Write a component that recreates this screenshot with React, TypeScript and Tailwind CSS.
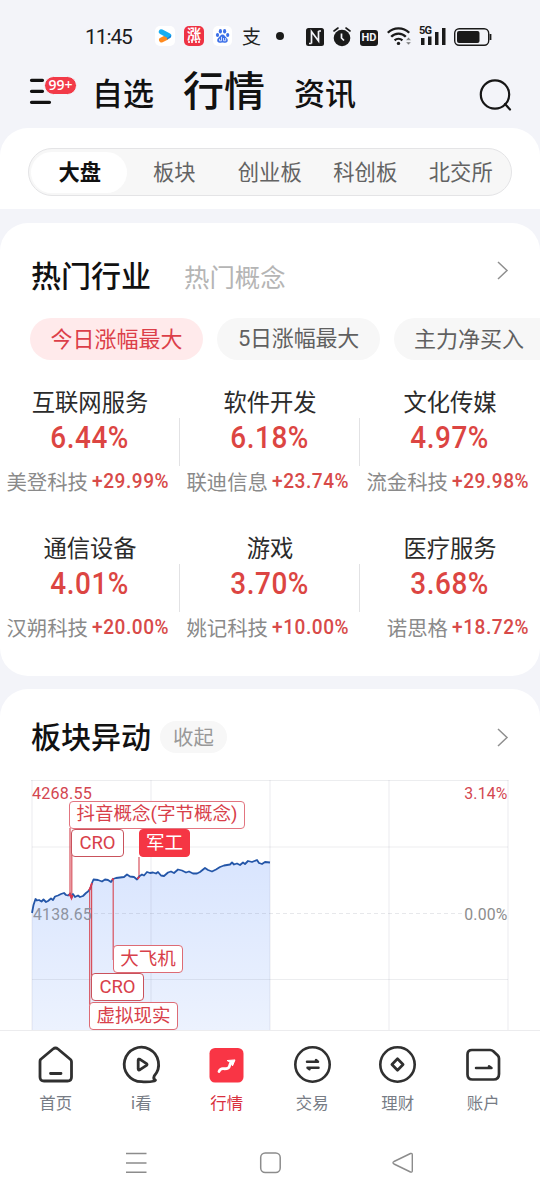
import type { ReactNode } from "react";
import clsx from "clsx";

const segments = ["大盘", "板块", "创业板", "科创板", "北交所"];

const industries = [
  { name: "互联网服务", change: "6.44%", stock: "美登科技", stockChange: "+29.99%" },
  { name: "软件开发", change: "6.18%", stock: "联迪信息", stockChange: "+23.74%" },
  { name: "文化传媒", change: "4.97%", stock: "流金科技", stockChange: "+29.98%" },
  { name: "通信设备", change: "4.01%", stock: "汉朔科技", stockChange: "+20.00%" },
  { name: "游戏", change: "3.70%", stock: "姚记科技", stockChange: "+10.00%" },
  { name: "医疗服务", change: "3.68%", stock: "诺思格", stockChange: "+18.72%" },
];

const trend =
  "32,913 33.5,905 35.5,899 37,900.5 39,900 41.5,901.5 43.5,899.5 46,902 48,901 51,898.5 53,900 55,896.5 58,895.5 61,894 64,893 66,895 68,895.5 70,894 71.5,898 73,894 75,897 78,895.5 80,897 83,896 86,893 88,891.5 90,889 92,883 93.5,879.5 98,880 102,881.5 105,879.5 108,880 111,882 113,879 116,878 120,877.5 124,877 127,874.5 130,876.5 134,877 137,879.5 139,876.5 142,874.5 144,875.5 147,872 150,873 153,872.5 156,873.5 158,872 161,875.5 164,876 168,872.5 171,871.5 174,873 178,869.5 182,870.5 186,872.5 189,871.5 193,873.5 197,873.5 200,872 205,868 208,870 212,871.5 216,869.5 220,867 224,865.5 230,864.5 232,862.5 234,864.5 237,863.5 240,865 243,862.5 245,864 248,861 252,862 257,860 259,863 262,864 265,862 270,862.5";

const stems = [
  { x: 70, y1: 828, y2: 896 },
  { x: 71.8, y1: 850, y2: 897 },
  { x: 139, y1: 857, y2: 878 },
  { x: 113.2, y1: 879, y2: 960 },
  { x: 89.7, y1: 890, y2: 1005 },
  { x: 91.6, y1: 885, y2: 980 },
];

function ChevronRight() {
  return (
    <svg width="12" height="20" viewBox="0 0 12 20" fill="none" stroke="#8f8f8f" strokeWidth="1.5">
      <path d="M1 2 10 10.500 1 19" />
    </svg>
  );
}

function StatusBar() {
  return (
    <div className="flex h-[72px] items-center pl-[85px]">
      <span className="mt-[3px] w-[48px] font-['Roboto',sans-serif] text-[21px] tracking-[-1.1px] whitespace-nowrap text-[#1c1c1e]">11:45</span>
      <svg className="ml-[22px] shrink-0" width="20" height="20" viewBox="0 0 20 20">
        <rect width="20" height="20" rx="5" fill="#fff" />
        <path d="M6.500 14 11 11.800" stroke="#ff8a1f" strokeWidth="5" strokeLinecap="round" />
        <path d="M6.300 5.800 13.800 9.800" stroke="#18aef2" strokeWidth="5" strokeLinecap="round" />
        <path d="M12 12.500 16 9.200q.5 1.600-.8 2.500L12 13.500Z" fill="#1677d9" />
      </svg>
      <span className="ml-[9px] flex size-[20px] shrink-0 flex-col items-center rounded-[5px] bg-[#ee3344] text-white">
        <span className="text-[14px] leading-[14px] font-bold">涨</span>
        <span className="mt-px h-[2px] w-[12px] border-t-2 border-dotted border-white/80" />
      </span>
      <svg className="ml-[9px] shrink-0" width="19" height="20" viewBox="0 0 19 20">
        <rect width="19" height="20" rx="5" fill="#fff" />
        <g fill="#3b6fe8">
          <ellipse cx="4.500" cy="9" rx="1.600" ry="2.100" />
          <ellipse cx="7.400" cy="5.200" rx="1.600" ry="2.200" />
          <ellipse cx="11.600" cy="5.200" rx="1.600" ry="2.200" />
          <ellipse cx="14.700" cy="9" rx="1.600" ry="2.100" />
          <path d="M9.500 8.500c2 0 2.600 2 4 3.200 2.200 1.800 1.400 5-1.200 5-1.200 0-1.600-.3-2.800-.3s-1.600.3-2.800.3c-2.600 0-3.400-3.200-1.200-5C6.900 10.500 7.500 8.500 9.500 8.500Z" />
        </g>
        <path d="M6.500 12.800v2h2v-4M10.500 12v2.800h2.200V12" fill="none" stroke="#dfe6ff" strokeWidth="0.9" />
      </svg>
      <span className="ml-[10px] w-[20px] text-[19px] leading-[20px] text-[#222]">支</span>
      <span className="ml-[14px] size-[8px] shrink-0 rounded-full bg-[#1a1a1a]" />
      <svg className="mt-[2px] ml-[22px] shrink-0" width="18" height="18" viewBox="0 0 18 18">
        <rect width="18" height="18" rx="2.500" fill="#1a1a1a" />
        <path d="M5.500 15.500V3.500l7 9.500V3M3 15.500h2.500M12.500 3H15" fill="none" stroke="#f3f4f9" strokeWidth="1.700" />
      </svg>
      <svg className="mt-[1px] ml-[9px] shrink-0" width="18" height="20" viewBox="0 0 18 20">
        <circle cx="9" cy="11" r="8.300" fill="#1a1a1a" />
        <path d="M1 4 5 1M17 4 13 1" stroke="#1a1a1a" strokeWidth="1.600" strokeLinecap="round" />
        <path d="M8.500 6.500V11l2.500 2.500" fill="none" stroke="#f3f4f9" strokeWidth="1.700" />
      </svg>
      <span className="mt-[3px] ml-[9px] flex h-[16px] w-[18px] shrink-0 items-center justify-center rounded-[3px] bg-[#1a1a1a] font-['Roboto',sans-serif] text-[11px] leading-none font-bold text-[#f3f4f9]">
        HD
      </span>
      <svg className="ml-[9px] shrink-0" width="25" height="20" viewBox="0 0 25 20" fill="none" stroke="#1a1a1a" strokeWidth="2.300">
        <path d="M.8 6.800a15 15 0 0 1 21.400 0M4.200 10.700a10 10 0 0 1 14.600 0M7.600 14.300a5.800 5.800 0 0 1 7.800 0" />
        <circle cx="11.500" cy="17.400" r="1.700" fill="#1a1a1a" stroke="none" />
        <path d="m18.800 14.200 2.700-3 2.700 3ZM18.800 16l2.700 3 2.700-3Z" fill="#777" stroke="#f3f4f9" strokeWidth=".5" />
      </svg>
      <div className="relative ml-[7px] h-[20px] w-[27px] shrink-0">
        <svg width="27" height="20" viewBox="0 0 27 20" fill="#1a1a1a">
          <path d="M2 12H5.500v7H2ZM9 10.500H12.500V19H9ZM16 6H19.500v13H16ZM23 2H26.500v17H23Z" />
        </svg>
        <span className="absolute -top-px left-0 bg-[#f3f4f9] font-['Roboto',sans-serif] text-[11px] leading-[11px] font-bold tracking-[-0.8px] text-[#1a1a1a]">5G</span>
      </div>
      <svg className="mt-[1px] ml-[8px] shrink-0" width="38" height="18" viewBox="0 0 38 18">
        <rect x=".7" y=".7" width="34" height="16.600" rx="4.500" fill="none" stroke="#1a1a1a" strokeWidth="1.400" />
        <rect x="3" y="3" width="22.500" height="12" rx="2" fill="#1a1a1a" />
        <path d="M36.500 6v6" stroke="#1a1a1a" strokeWidth="1.800" />
      </svg>
    </div>
  );
}

function Header() {
  return (
    <header className="flex h-[56px] items-end pl-[29px] whitespace-nowrap text-[#111]">
      <div className="relative h-[52px] w-[63px] shrink-0">
        <svg width="24" height="30" viewBox="0 0 24 30" stroke="#111" strokeWidth="3.200" strokeLinecap="round">
          <path d="M2.500 4.300h11M2.500 15.300h11M2.500 26.300h18" />
        </svg>
        <span className="absolute top-0 left-[15px] flex h-[19px] w-[33px] items-center justify-center rounded-full border border-[#f3f4f9] bg-[#f23a48] pb-px font-['Open_Sans',sans-serif] text-[14px] leading-none font-semibold text-white">
          99+
        </span>
      </div>
      <span className="h-[52px] text-[31px] leading-[31px] font-medium">自选</span>
      <span className="ml-[29px] h-[60px] text-[41px] leading-[41px] font-medium">行情</span>
      <span className="ml-[29px] h-[52px] text-[31px] leading-[31px] font-medium">资讯</span>
      <svg className="mb-[16px] ml-[123px] shrink-0" width="34" height="34" viewBox="0 0 34 34" fill="none" stroke="#161616" strokeWidth="2.200">
        <circle cx="16" cy="16.500" r="14.200" />
        <path d="m26 26 5 5.500" strokeLinecap="round" />
      </svg>
    </header>
  );
}

function IndustryCell({ item, divider }: { item: (typeof industries)[number]; divider: boolean }) {
  return (
    <div className="relative h-[145.500px] whitespace-nowrap">
      <div className="text-center text-[23.300px] leading-[30px] text-[#2b2b2b]">{item.name}</div>
      <div className="mt-[3px] text-center font-['Roboto',sans-serif] text-[31px] leading-[38px] font-medium">
        <span className="inline-block scale-x-[.9] tracking-[0.6px] text-[#dc4542]">{item.change}</span>
      </div>
      <div className="mt-[10px] flex items-center gap-[4px] pl-[6px] leading-[28px]">
        <span className="w-[82px] text-right text-[20.400px] text-[#8a8a8a]">{item.stock}</span>
        <span className="origin-left scale-x-[.93] font-['Roboto',sans-serif] text-[20.500px] font-medium tracking-[0.6px] text-[#d84a49]">
          {item.stockChange}
        </span>
      </div>
      {divider && <div className="absolute top-[32px] right-0 h-[48px] w-px bg-[#e2e2e4]" />}
    </div>
  );
}

function ChartTag({ className, children }: { className: string; children: ReactNode }) {
  return (
    <span
      className={clsx(
        "absolute flex h-[28px] items-center justify-center rounded-[4px] border text-[18.500px] leading-none whitespace-nowrap",
        className,
      )}
    >
      {children}
    </span>
  );
}

function SectorChart() {
  return (
    <div className="relative h-[250px] w-full font-['Roboto','Noto_Sans_CJK_SC',sans-serif]">
      <svg width="540" height="250" viewBox="0 780 540 250" fill="none">
        <defs>
          <linearGradient id="trendFill" x1="0" y1="860" x2="0" y2="1030" gradientUnits="userSpaceOnUse">
            <stop offset="0" stopColor="#d9e5fe" />
            <stop offset="1" stopColor="#ecf2fe" />
          </linearGradient>
        </defs>
        <path d={`M${trend.split(" ").join("L")}V1030H32Z`} fill="url(#trendFill)" />
        <path d="M31 780.500H508.500M32 847H508M32 979.500H508" stroke="#6b7280" strokeOpacity=".13" />
        <path d="M32 780V1030M151 780V1030M270 780V1030M389 780V1030M508 780V1030" stroke="#6b7280" strokeOpacity=".09" strokeWidth="1.500" />
        <path d="M94 913.500H464" stroke="#6b7280" strokeOpacity=".16" strokeDasharray="4 3" />
        {stems.map((s) => (
          <path key={s.x} d={`M${s.x} ${s.y1}V${s.y2}`} stroke="#d8505c" strokeWidth="1.200" />
        ))}
        <polyline points={trend} stroke="#2456a8" strokeWidth="1.800" strokeLinejoin="round" />
        <path d="m69 896 1-2 1.500 4 1-3M89 890.500l1.500-3 1.500-4.500M112 880l1.500-1.500M137.500 879l2-2.500" stroke="#e0384c" strokeWidth="1.800" />
      </svg>
      <span className="absolute top-[3px] left-[32px] origin-left scale-x-[.95] text-[17px] leading-[20px] tracking-[0.2px] text-[#d34650]">4268.55</span>
      <span className="absolute top-[124px] left-[33px] origin-left scale-x-[.93] text-[17px] leading-[20px] tracking-[0.2px] text-[#8d93a1]">4138.65</span>
      <span className="absolute top-[3px] right-[32px] origin-right scale-x-[.93] text-[17px] leading-[20px] tracking-[0.2px] text-[#d34650]">3.14%</span>
      <span className="absolute top-[124px] right-[32px] origin-right scale-x-[.93] text-[17px] leading-[20px] tracking-[0.2px] text-[#8d8d8d]">0.00%</span>
      <ChartTag className="top-[20.500px] left-[69px] w-[176px] border-[#e27580] bg-white text-[#d8404a]">抖音概念(字节概念)</ChartTag>
      <ChartTag className="top-[49px] left-[71px] w-[53px] border-[#c9525c] bg-white text-[#d8404a]">CRO</ChartTag>
      <ChartTag className="top-[49px] left-[139px] w-[51px] border-[#f53644] bg-[#f53644] text-white">军工</ChartTag>
      <ChartTag className="top-[164.500px] left-[113px] w-[70px] border-[#dd6b75] bg-white pt-px text-[#d8404a]">大飞机</ChartTag>
      <ChartTag className="top-[193px] left-[91px] w-[53px] border-[#c9525c] bg-white text-[#d8404a]">CRO</ChartTag>
      <ChartTag className="top-[221.500px] left-[89px] w-[89px] border-[#dd6b75] bg-white pt-px text-[#d8404a]">虚拟现实</ChartTag>
    </div>
  );
}

const tabs = [
  {
    label: "首页",
    icon: (
      <path d="M3.500 13.500 16 3q2.500-2 5 0l12.500 10.500q1 .9 1 2.300V31q0 4-4 4H7q-4 0-4-4V15.800q0-1.400.5-2.300ZM13.500 27.500h10.500" />
    ),
  },
  {
    label: "i看",
    icon: (
      <>
        <path d="M31.200 30A17.200 17.200 0 1 0 18.500 35.700q6.500.6 13-.7l1-.8q-2.600-1.200-1.300-4.200Z" strokeWidth="2.800" />
        <path d="M15.200 14.200v8.600q.2 1.800 1.800.9l6.500-4.300q1.100-.9 0-1.800L17 13.300q-1.600-.8-1.800.9Z" />
      </>
    ),
  },
  {
    label: "行情",
    active: true,
    icon: (
      <>
        <rect x="1.500" y="2" width="34" height="34.500" rx="5.500" fill="#f93545" stroke="none" />
        <path d="M11 25.500q1.500-3.300 4.500-2.800 5.500.3 6-2.700.5-2.500 2-4" stroke="#fff" strokeWidth="2.800" />
        <path d="m19.500 14.500 7.500-.6-2.500 6-1.500-3Z" fill="#fff" stroke="#fff" strokeWidth="1" />
      </>
    ),
  },
  {
    label: "交易",
    icon: (
      <>
        <circle cx="18.500" cy="18.500" r="17.200" strokeWidth="2.600" />
        <path d="M13 15.700h11l-2-1.600M24.500 21.700H13.500l2 1.600" strokeWidth="2.500" />
      </>
    ),
  },
  {
    label: "理财",
    icon: (
      <>
        <circle cx="18.500" cy="18.500" r="17.200" strokeWidth="2.600" />
        <path d="m18.500 12.800 5.600 5.700-5.600 5.700-5.600-5.700Z" strokeWidth="2.700" />
      </>
    ),
  },
  {
    label: "账户",
    icon: (
      <>
        <path d="M7 4h18q2 0 3.300 1.200l4.500 4.300q1.200 1.200 1.200 3V28q0 5.500-5.500 5.500H7.500Q2.500 33.500 2.500 28.500V8.500Q2.500 4 7 4Z" strokeWidth="2.700" />
        <path d="M11 22h15.500l-2.500-1.800" strokeWidth="2.500" />
      </>
    ),
  },
];

function TabBar() {
  return (
    <nav className="grid h-[90px] grid-cols-6 border-t border-[#ececee] bg-white pr-[14px] pl-[13px]">
      {tabs.map((tab) => (
        <div key={tab.label} className="flex flex-col items-center pt-[15px]">
          <svg
            width="37"
            height="37"
            viewBox="0 0 37 37"
            className="overflow-visible"
            fill="none"
            stroke="#303030"
            strokeWidth="2.800"
            strokeLinecap="round"
            strokeLinejoin="round"
          >
            {tab.icon}
          </svg>
          <span className={clsx("mt-[9px] text-[16.400px] leading-[20px]", tab.active ? "text-[#d9303f]" : "text-[#777c85]")}>
            {tab.label}
          </span>
        </div>
      ))}
    </nav>
  );
}

export default function App() {
  return (
    <main className="flex h-[1200px] w-[540px] flex-col overflow-hidden bg-[#f3f4f9] font-['Noto_Sans_CJK_SC',sans-serif]">
      <StatusBar />
      <Header />

      <section className="h-[81px] shrink-0 rounded-t-[28px] bg-white px-[28px] pt-[20px]">
        <div className="flex h-[48px] items-center rounded-full border border-[#e4e4e6] bg-[#f7f7f7] pl-[2px]">
          {segments.map((name, i) => (
            <span
              key={name}
              className={clsx(
                "flex h-[41px] w-[95.500px] items-center justify-center rounded-full pb-[2px] text-[21.300px] leading-none",
                i === 0 ? "bg-white pl-[2px] font-bold text-[#111]" : "text-[#636363]",
              )}
            >
              {name}
            </span>
          ))}
        </div>
      </section>

      <section className="mt-[14px] h-[453px] shrink-0 overflow-hidden rounded-[28px] bg-white">
        <div className="flex h-[95px] items-start pt-[36px] pr-[31px] pl-[31px]">
          <h2 className="text-[30px] leading-[30px] font-medium text-[#111]">热门行业</h2>
          <span className="mt-[4px] ml-[33px] text-[25.400px] leading-[26px] text-[#b5b5b5]">热门概念</span>
          <div className="mt-px ml-auto">
            <ChevronRight />
          </div>
        </div>
        <div className="flex h-[42px] gap-[14px] pl-[30px] text-[22px] leading-[38px] whitespace-nowrap text-[#606060]">
          <span className="w-[173px] shrink-0 rounded-full bg-[#ffeaeb] text-center text-[#dc3f49]">今日涨幅最大</span>
          <span className="w-[163px] shrink-0 rounded-full bg-[#f7f7f7] text-center font-['Roboto','Noto_Sans_CJK_SC',sans-serif] leading-[41px] tracking-[-0.2px]">
            5日涨幅最大
          </span>
          <span className="w-[173px] shrink-0 rounded-full bg-[#f7f7f7] pl-[20px]">主力净买入</span>
        </div>
        <div className="grid grid-cols-3 pt-[26px]">
          {industries.map((item, i) => (
            <IndustryCell key={item.name} item={item} divider={i % 3 !== 2} />
          ))}
        </div>
      </section>

      <section className="mt-[13px] h-[341px] shrink-0 overflow-hidden rounded-t-[28px] bg-white">
        <div className="flex h-[91px] items-center px-[31px]">
          <h2 className="text-[30px] leading-[30px] font-medium text-[#111]">板块异动</h2>
          <span className="mt-[5px] ml-[9px] flex h-[32px] w-[67px] items-center justify-center rounded-full bg-[#f7f7f7] pb-px text-[20.400px] leading-none text-[#999]">
            收起
          </span>
          <div className="mt-[5px] ml-auto">
            <ChevronRight />
          </div>
        </div>
        <SectorChart />
      </section>

      <TabBar />

      <div className="flex flex-1 items-start bg-white pt-[31px] pl-[125px]">
        <svg width="22" height="24" viewBox="0 0 22 24" stroke="#8c8c8c" strokeWidth="1.500">
          <path d="M1 2.500h20.500M1 12h20.500M1 21.200h20.500" />
        </svg>
        <svg className="ml-[112px]" width="24" height="24" viewBox="0 0 24 24" fill="none" stroke="#8c8c8c" strokeWidth="1.500">
          <rect x="1.700" y="2" width="19.500" height="19.500" rx="4.500" />
        </svg>
        <svg className="ml-[108px]" width="24" height="24" viewBox="0 0 24 24" fill="none" stroke="#8c8c8c" strokeWidth="1.400" strokeLinejoin="round">
          <path d="M19.500 2.500 3 10.500q-2 1.200 0 2.500l16.500 8q1.800.6 1.800-1.200V3.800q0-1.800-1.800-1.300Z" />
        </svg>
      </div>
    </main>
  );
}
